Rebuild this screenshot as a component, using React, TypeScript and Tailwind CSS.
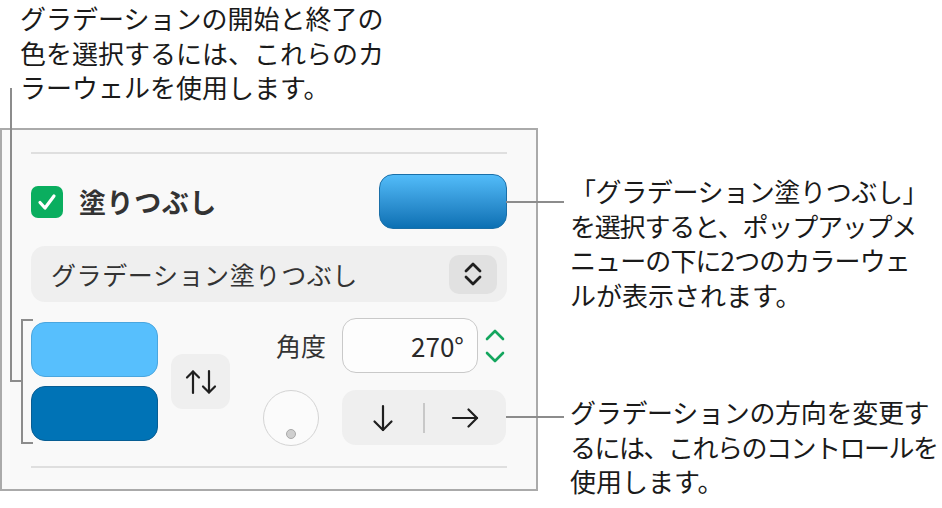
import React from "react";

function Panel() {
  return (
    <div className="w-[538px] h-[363px] shrink-0 border-2 border-[#aaaaaa] bg-[#f9f9f9] px-[29px] pt-[22px] flex flex-col text-[#333333]">
      <div className="h-[2px] bg-[#dfdfdf]" />
      <div className="mt-[20px] h-[55px] flex items-center justify-between">
        <div className="flex items-center">
          <div className="w-[32px] h-[32px] rounded-[7px] bg-[#0aae5f] flex items-center justify-center">
            <svg width="32" height="32" viewBox="0 0 32 32">
              <polyline points="9,16.5 14,22 23,10" fill="none" stroke="white" strokeWidth="3.2" strokeLinecap="round" strokeLinejoin="round" />
            </svg>
          </div>
          <span className="ml-[16px] text-[27px] leading-none font-bold tracking-[0.5px]">塗りつぶし</span>
        </div>
        <div className="w-[128px] h-[55px] rounded-[14px] border border-[#1a6fa8] bg-linear-to-b from-[#52bcf9] to-[#0a70b3]" />
      </div>
      <div className="mt-[17px] h-[56px] rounded-[14px] bg-[#efefef] flex items-center pl-[20px] pr-[10px]">
        <span className="flex-1 text-[25px] leading-none tracking-[0.6px]">グラデーション塗りつぶし</span>
        <div className="w-[48px] h-[39px] rounded-[10px] bg-[#e1e1e1] flex items-center justify-center">
          <svg width="20" height="28" viewBox="0 0 20 28">
            <polyline points="3,11 10,4 17,11" fill="none" stroke="#1f1f1f" strokeWidth="2.8" strokeLinecap="round" strokeLinejoin="round" />
            <polyline points="3,17 10,24 17,17" fill="none" stroke="#1f1f1f" strokeWidth="2.8" strokeLinecap="round" strokeLinejoin="round" />
          </svg>
        </div>
      </div>
      <div className="mt-[16px] h-[127px] flex items-center">
        <div className="w-[127px] flex flex-col gap-[9px]">
          <div className="h-[55px] rounded-[14px] bg-[#57bffd] border border-[#4aa6df]" />
          <div className="h-[55px] rounded-[14px] bg-[#0073b6] border border-[#075d93]" />
        </div>
        <div className="ml-[13px] w-[59px] h-[55px] rounded-[12px] bg-[#efefef] flex items-center justify-center">
          <svg width="32" height="26" viewBox="0 0 32 26">
            <line x1="8" y1="2.5" x2="8" y2="24" stroke="#1f1f1f" strokeWidth="2.2" strokeLinecap="round" />
            <polyline points="2,8.5 8,2.5 14,8.5" fill="none" stroke="#1f1f1f" strokeWidth="2.2" strokeLinecap="round" strokeLinejoin="round" />
            <line x1="24" y1="2" x2="24" y2="23.5" stroke="#1f1f1f" strokeWidth="2.2" strokeLinecap="round" />
            <polyline points="18,17.5 24,23.5 30,17.5" fill="none" stroke="#1f1f1f" strokeWidth="2.2" strokeLinecap="round" strokeLinejoin="round" />
          </svg>
        </div>
        <div className="grid grid-cols-[112px_164px] gap-y-[17px]">
          <div className="h-[55px] flex items-center justify-end pr-[16px] text-[25px] leading-none">角度</div>
          <div className="h-[55px] flex items-center">
            <div className="w-[136px] h-[55px] rounded-[14px] border-[1.5px] border-[#c9c9c9] bg-[#fdfdfd] flex items-center justify-end pr-[13px] text-[26px] leading-none text-[#2a2a2a]">
              270°
            </div>
            <svg className="ml-[7px]" width="20" height="36" viewBox="0 0 20 36">
              <polyline points="2,11 10,3 18,11" fill="none" stroke="#14a65e" strokeWidth="2.6" strokeLinecap="round" strokeLinejoin="round" />
              <polyline points="2,25 10,33 18,25" fill="none" stroke="#14a65e" strokeWidth="2.6" strokeLinecap="round" strokeLinejoin="round" />
            </svg>
          </div>
          <div className="h-[55px] flex items-center pl-[33px]">
            <div className="relative w-[56px] h-[56px] rounded-full border-[1.5px] border-[#d4d4d4] bg-[#fbfbfb]">
              <div className="absolute left-[22px] top-[38px] w-[10px] h-[10px] rounded-full bg-[#cfcfcf] border border-[#a9a9a9]" />
            </div>
          </div>
          <div className="h-[55px] rounded-[14px] bg-[#efefef] flex items-center">
            <div className="flex-1 flex justify-center">
              <svg width="22" height="28" viewBox="0 0 22 28">
                <line x1="11" y1="2" x2="11" y2="26" stroke="#1f1f1f" strokeWidth="2.2" strokeLinecap="round" />
                <polyline points="2.5,17.5 11,26 19.5,17.5" fill="none" stroke="#1f1f1f" strokeWidth="2.2" strokeLinecap="round" strokeLinejoin="round" />
              </svg>
            </div>
            <div className="w-[1.5px] h-[30px] bg-[#c8c8c8]" />
            <div className="flex-1 flex justify-center">
              <svg width="28" height="20" viewBox="0 0 28 20">
                <line x1="2" y1="10" x2="26" y2="10" stroke="#1f1f1f" strokeWidth="2.2" strokeLinecap="round" />
                <polyline points="17.5,1.5 26,10 17.5,18.5" fill="none" stroke="#1f1f1f" strokeWidth="2.2" strokeLinecap="round" strokeLinejoin="round" />
              </svg>
            </div>
          </div>
        </div>
      </div>
      <div className="mt-[21px] h-[2px] bg-[#dfdfdf]" />
    </div>
  );
}

export default function App() {
  return (
    <div className="relative w-[942px] h-[508px] bg-white overflow-hidden font-['Noto_Sans_CJK_JP','Noto_Sans',sans-serif] text-[#1a1a1a]">
      <div className="h-[128px] pl-[20px] pt-[1px] text-[26px] leading-[34.5px] whitespace-nowrap">
        <p>グラデーションの開始と終了の</p>
        <p>色を選択するには、これらのカ</p>
        <p>ラーウェルを使用します。</p>
      </div>
      <div className="flex">
        <Panel />
        <div className="flex flex-col pl-[32px] text-[26px] leading-[34.5px] whitespace-nowrap">
          <div className="mt-[46px]">
            <p className="tracking-[-0.4px]">「グラデーション塗りつぶし」</p>
            <p className="tracking-[-1.2px]">を選択すると、ポップアップメ</p>
            <p className="tracking-[-0.9px]">ニューの下に2つのカラーウェ</p>
            <p>ルが表示されます。</p>
          </div>
          <div className="mt-[83px]">
            <p className="tracking-[-0.3px]">グラデーションの方向を変更す</p>
            <p className="tracking-[-1.5px]">るには、これらのコントロールを</p>
            <p>使用します。</p>
          </div>
        </div>
      </div>

      {/* callout lines */}
      <div className="absolute left-[10px] top-[88px] w-[2px] h-[294px] bg-[#8c8c8c]" />
      <div className="absolute left-[10px] top-[380px] w-[13px] h-[2px] bg-[#8c8c8c]" />
      <div className="absolute left-[21px] top-[319px] w-[2px] h-[125px] bg-[#8c8c8c]" />
      <div className="absolute left-[21px] top-[319px] w-[12px] h-[2px] bg-[#8c8c8c]" />
      <div className="absolute left-[21px] top-[442px] w-[12px] h-[2px] bg-[#8c8c8c]" />
      <div className="absolute left-[506px] top-[201px] w-[58px] h-[2px] bg-[#8c8c8c]" />
      <div className="absolute left-[506px] top-[416px] w-[58px] h-[2px] bg-[#8c8c8c]" />
    </div>
  );
}
